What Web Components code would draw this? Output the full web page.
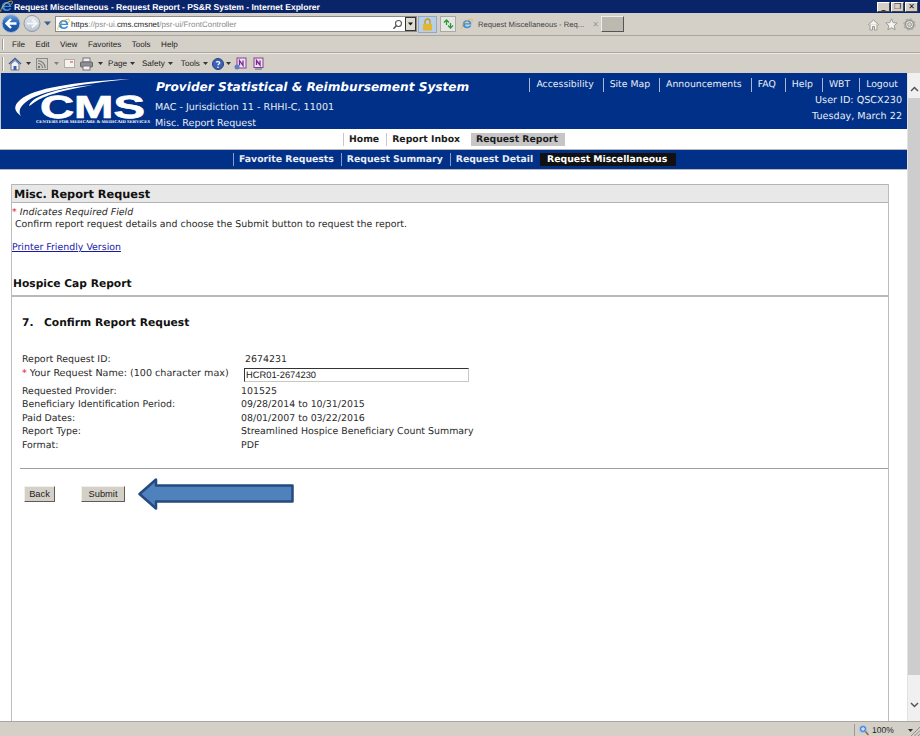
<!DOCTYPE html>
<html>
<head>
<meta charset="utf-8">
<title>Request Miscellaneous - Request Report - PS&amp;R System - Internet Explorer</title>
<style>
  html, body { margin: 0; height: 100%; overflow: hidden; background: #d4d0c8; text-rendering: geometricPrecision; }
  body { font-family: "DejaVu Sans", Verdana, sans-serif; font-size: 9.4px; color: #222; }
</style>
</head>
<body>
<ie-window>
  <ie-titlebar slot="chrome">Request Miscellaneous - Request Report - PS&amp;R System - Internet Explorer</ie-titlebar>
  <ie-addressbar slot="chrome"></ie-addressbar>
  <ie-menubar slot="chrome"></ie-menubar>
  <ie-commandbar slot="chrome"></ie-commandbar>

  <cms-header></cms-header>
  <cms-nav></cms-nav>
  <cms-subnav></cms-subnav>
  <report-page></report-page>

  <ie-statusbar slot="status"></ie-statusbar>
</ie-window>

<script>
const ieLogo = size => `
  <svg width="${size}" height="${size}" viewBox="0 0 16 16">
    <path d="M2.2 8.6C2.2 5 5 2.6 8.4 2.6c3.2 0 5.5 2.4 5.5 6H5.4c.1 2 1.400 3 3.100 3 1.300 0 2.300-.5 3.100-1.500h2.200c-1 2.300-3 3.500-5.400 3.500-3.500 0-6.200-2-6.200-5zM5.500 7h5.800c-.2-1.500-1.300-2.500-2.900-2.500S5.800 5.500 5.500 7z" fill="#3b8fd8"/>
    <path d="M1 14.500C.2 12 3.500 6 9 3c2.500-1.400 5.200-2.200 6-1.300.6.700.1 2.300-.8 3.800" fill="none" stroke="#f0b52c" stroke-width="1.100"/>
  </svg>`;

class IeWindow extends HTMLElement {
  constructor() {
    super();
    this.root = this.attachShadow({ mode: 'open' });
    this.root.innerHTML = `
      <style>
        :host { display: flex; flex-direction: column; width: 920px; height: 736px; overflow: hidden; }
        .viewport { flex: 1; min-height: 0; display: flex; background: #fff; }
        .page { flex: 1; min-width: 0; display: flex; flex-direction: column; }
        .scroll { width: 13px; background: #f0f0f0; border-left: 1px solid #e2e2e2; display: flex; flex-direction: column; box-sizing: border-box; }
        .scroll .up { height: 25px; display: flex; align-items: center; justify-content: center; padding-top: 6px; box-sizing: border-box; }
        .scroll .down { height: 46px; display: flex; align-items: flex-end; justify-content: center; padding-bottom: 13px; box-sizing: border-box; }
        .scroll .thumb { flex: 1; background: #cdcdcd; }
      </style>
      <slot name="chrome"></slot>
      <div class="viewport">
        <div class="page"><slot></slot></div>
        <div class="scroll">
          <div class="up"><svg width="9" height="6" viewBox="0 0 9 6"><path d="M1 5l3.500-3.500L8 5" fill="none" stroke="#555" stroke-width="1.500"/></svg></div>
          <div class="thumb"></div>
          <div class="down"><svg width="9" height="6" viewBox="0 0 9 6"><path d="M1 1l3.500 3.500L8 1" fill="none" stroke="#555" stroke-width="1.500"/></svg></div>
        </div>
      </div>
      <slot name="status"></slot>`;
  }
}

class IeTitlebar extends HTMLElement {
  constructor() {
    super();
    this.root = this.attachShadow({ mode: 'open' });
    this.root.innerHTML = `
      <style>
        :host { display: flex; align-items: center; height: 13px; background: #0a246a; color: #fff; font: bold 8.560px "Liberation Sans", sans-serif; white-space: nowrap; }
        .logo { width: 14px; height: 13px; display: flex; }
        .text { flex: 1; }
        .ctl { display: flex; gap: 1px; padding: 1px 2px 0 0; }
        .ctl span { background: #d4d0c8; border: 1px solid; border-color: #fff #444 #444 #fff; height: 8px; width: 11px; color: #111; font: bold 8px/8px "DejaVu Sans", sans-serif; text-align: center; overflow: hidden; }
      </style>
      <span class="logo">${ieLogo(13)}</span>
      <span class="text"><slot></slot></span>
      <span class="ctl"><span>_</span><span>&#10064;</span><span>&#10005;</span></span>`;
  }
}

class IeAddressbar extends HTMLElement {
  constructor() {
    super();
    this.root = this.attachShadow({ mode: 'open' });
    this.root.innerHTML = `
      <style>
        :host { display: flex; align-items: center; height: 22px; background: #d4d0c8; border-bottom: 1px solid #a8a6a0; font: 7.950px "Liberation Sans", Arial, sans-serif; color: #333; }
        .nav { display: flex; align-items: center; width: 55px; padding-left: 1px; box-sizing: border-box; }
        .addr { width: 362px; height: 16px; box-sizing: border-box; background: #fff; border: 1px solid #8a8a8a; display: flex; align-items: center; padding-left: 1px; gap: 1px; color: #8b8b8b; }
        .addr b { font-weight: normal; color: #222; }
        .url { flex: 1; white-space: nowrap; }
        .addr .s { margin-right: 1px; }
        .lock { width: 19px; height: 17px; margin-left: 1px; background: #b9cfe6; border: 1px solid #93a8c4; box-sizing: border-box; display: flex; align-items: center; justify-content: center; }
        .go { width: 16px; height: 16px; margin-left: 3px; border: 1px solid #a9a9a9; background: #e6e6e2; box-sizing: border-box; display: flex; align-items: center; justify-content: center; }
        .tab { display: flex; align-items: center; gap: 5px; width: 142px; height: 21px; margin-left: 3px; padding-left: 2px; box-sizing: border-box; white-space: nowrap; color: #444; font-size: 7.650px; }
        .tab .x { margin-left: 3px; color: #999; font-size: 8px; }
        .new { width: 23px; height: 16px; background: #bdb9b0; border: 1px solid; border-color: #f0eee8 #555 #555 #f0eee8; box-sizing: border-box; }
        .tools { margin-left: auto; display: flex; gap: 5px; padding-right: 4px; align-items: center; }
      </style>
      <div class="nav">
        <svg width="54" height="20" viewBox="0 0 54 20">
          <defs>
            <linearGradient id="bk" x1="0" y1="0" x2="0" y2="1"><stop offset="0" stop-color="#7aa8dc"/><stop offset=".5" stop-color="#1e5fb4"/><stop offset="1" stop-color="#1a4f9c"/></linearGradient>
            <linearGradient id="fw" x1="0" y1="0" x2="0" y2="1"><stop offset="0" stop-color="#e4e8ed"/><stop offset="1" stop-color="#b9c3cf"/></linearGradient>
          </defs>
          <circle cx="31" cy="9.500" r="8" fill="url(#fw)" stroke="#8e98a6"/>
          <path d="M26 9.500h9.500M31 5.500l4.500 4-4.500 4" fill="none" stroke="#f4f6f8" stroke-width="2"/>
          <circle cx="10" cy="9.500" r="9" fill="url(#bk)" stroke="#a8bdd8"/>
          <path d="M15.500 9.500H6M10 5L5.500 9.500 10 14" fill="none" stroke="#fff" stroke-width="2.400"/>
          <path d="M43 7.500h7l-3.500 4z" fill="#33608f"/>
        </svg>
      </div>
      <div class="addr">
        ${ieLogo(13)}
        <span class="url"><b>https</b>://psr-ui.<b>cms.cmsnet</b>/psr-ui/FrontController</span>
        <svg class="s" width="11" height="11" viewBox="0 0 11 11"><circle cx="6.500" cy="4.500" r="3" fill="none" stroke="#555" stroke-width="1.100"/><path d="M4.300 6.800L1.500 9.800" stroke="#555" stroke-width="1.500"/></svg>
        <svg width="11" height="14" viewBox="0 0 11 14"><rect x=".5" y=".5" width="10" height="13" fill="#dedbd3" stroke="#333"/><path d="M3 5.500h5L5.500 8.500z" fill="#111"/></svg>
      </div>
      <div class="lock"><svg width="11" height="13" viewBox="0 0 11 13"><path d="M3 6V3.500a2.500 2.500 0 015 0V6" fill="none" stroke="#c59a1c" stroke-width="1.400"/><rect x="1" y="6" width="9" height="6.500" fill="#e4b62e"/></svg></div>
      <div class="go"><svg width="11" height="10" viewBox="0 0 11 10"><path d="M1 3.500l2.500-2.500L6 3.500M3.500 1.500V6" fill="none" stroke="#2d9b3a" stroke-width="1.300"/><path d="M5 6.500l2.500 2.500L10 6.500M7.500 8.500V4" fill="none" stroke="#2d9b3a" stroke-width="1.300"/></svg></div>
      <div class="tab">${ieLogo(12)}<span>Request Miscellaneous - Req...</span><span class="x">&#10005;</span></div>
      <div class="new"></div>
      <div class="tools">
        <svg width="13" height="13" viewBox="0 0 13 13"><path d="M1 7l5.500-5L12 7M3 6.500V12h2.500V8.500h2V12H10V6.500" fill="#f5f4f0" stroke="#9b9b96"/></svg>
        <svg width="13" height="13" viewBox="0 0 13 13"><path d="M6.500 .8l1.700 3.800 4 .4-3 2.700.9 4.100-3.600-2.100-3.600 2.100.9-4.100-3-2.700 4-.4z" fill="#f5f4f0" stroke="#9b9b96"/></svg>
        <svg width="13" height="13" viewBox="0 0 13 13"><circle cx="6.500" cy="6.500" r="4.200" fill="#f5f4f0" stroke="#9b9b96" stroke-width="2"/><circle cx="6.500" cy="6.500" r="5.500" fill="none" stroke="#b0b0aa" stroke-width="1.600" stroke-dasharray="2 2.300"/><circle cx="6.500" cy="6.500" r="2" fill="#d4d0c8" stroke="#9b9b96"/></svg>
      </div>`;
  }
}

class IeMenubar extends HTMLElement {
  constructor() {
    super();
    this.root = this.attachShadow({ mode: 'open' });
    const items = ['File', 'Edit', 'View', 'Favorites', 'Tools', 'Help'];
    this.root.innerHTML = `
      <style>
        :host { display: flex; align-items: center; height: 17px; box-sizing: border-box; background: #d4d0c8; border-top: 1px solid #d4d0c8; border-bottom: 1px solid #a8a6a0; font: 8.100px "Liberation Sans", Arial, sans-serif; color: #222; padding-left: 2px; }
        .grip { width: 1px; height: 11px; background: #9e9c96; border-right: 1px solid #fff; margin-right: 8px; }
        span { margin-right: 10.500px; }
      </style>
      <div class="grip"></div>
      ${items.map(i => `<span>${i}</span>`).join('')}`;
  }
}

class IeCommandbar extends HTMLElement {
  constructor() {
    super();
    this.root = this.attachShadow({ mode: 'open' });
    const caret = '<svg class="caret" width="5" height="3" viewBox="0 0 5 3"><path d="M0 0h5L2.500 3z" fill="#333"/></svg>';
    this.root.innerHTML = `
      <style>
        :host { display: flex; align-items: center; height: 20px; box-sizing: border-box; background: #d4d0c8; border-top: 1px solid #eceae4; font: 8.100px "Liberation Sans", Arial, sans-serif; color: #222; padding-left: 2px; }
        .grip { width: 1px; height: 14px; background: #9e9c96; border-right: 1px solid #fff; margin-right: 4px; }
        .i { display: flex; align-items: center; gap: 3px; margin-right: 8px; }
        .caret { flex: none; }
      </style>
      <div class="grip"></div>
      <div class="i" style="gap:4px;margin-right:5px"><svg width="14" height="14" viewBox="0 0 14 14"><path d="M1 7l6-5.500L13 7" fill="none" stroke="#3a5fa8" stroke-width="1.500"/><path d="M3 7v6h8V7L7 3.500z" fill="#f2f2f2" stroke="#6b7894"/><rect x="5.500" y="9" width="3" height="4" fill="#3a5fa8"/></svg>${caret}</div>
      <div class="i" style="gap:6px;margin-right:5px"><svg width="12" height="12" viewBox="0 0 12 12"><rect x=".5" y=".5" width="11" height="11" fill="#cfcdc7" stroke="#8a8a86"/><circle cx="3" cy="9" r="1.200" fill="#777"/><path d="M2 5.500a4.500 4.500 0 014.500 4.500M2 2.800A7.200 7.200 0 019.200 10" fill="none" stroke="#777" stroke-width="1.100"/></svg><svg class="caret" width="5" height="3" viewBox="0 0 5 3" opacity=".5"><path d="M0 0h5L2.500 3z" fill="#333"/></svg></div>
      <div class="i" style="margin-right:5px"><svg width="11" height="9" viewBox="0 0 11 9"><rect x=".5" y=".5" width="10" height="8" fill="#f4f3f0" stroke="#b0aea8"/><path d="M6 3h3" stroke="#c43"/></svg></div>
      <div class="i" style="gap:5px;margin-right:5px"><svg width="13" height="14" viewBox="0 0 13 14"><rect x="3" y="1" width="7" height="4" fill="#eee" stroke="#777"/><rect x=".5" y="5" width="12" height="5" rx="1" fill="#8d8f94" stroke="#666"/><rect x="3" y="9" width="7" height="4" fill="#f2f2f2" stroke="#777"/></svg>${caret}</div>
      <div class="i" style="margin-right:7px">Page ${caret}</div>
      <div class="i">Safety ${caret}</div>
      <div class="i" style="margin-right:4px">Tools ${caret}</div>
      <div class="i" style="gap:2px;margin-right:3px"><svg width="12" height="12" viewBox="0 0 12 12"><circle cx="6" cy="6" r="5.500" fill="#3c62b5" stroke="#26408a"/><path d="M4.300 4.500C4.500 3.300 7.700 3.200 7.700 4.800 7.700 6 6 6 6 7.300" fill="none" stroke="#fff" stroke-width="1.300"/><circle cx="6" cy="9.200" r=".8" fill="#fff"/></svg>${caret}</div>
      <div class="i" style="gap:5px">
        <svg width="13" height="13" viewBox="0 0 13 13"><rect x="3" y="1" width="9" height="10" fill="#ece3f0" stroke="#8a3f96"/><path d="M5.500 8.500V3.500l3.500 5v-5" fill="none" stroke="#7b2a8c" stroke-width="1.300"/><circle cx="3" cy="10" r="2.500" fill="#5a7fc8"/></svg>
        <svg width="13" height="13" viewBox="0 0 13 13"><rect x="2" y="1" width="9" height="9.500" fill="#ece3f0" stroke="#8a3f96"/><path d="M4.500 8V3.500L8 8V3.500" fill="none" stroke="#7b2a8c" stroke-width="1.300"/><path d="M3 12h7" stroke="#7d8ba0" stroke-width="1.500"/></svg>
      </div>`;
  }
}

class CmsLogo extends HTMLElement {
  constructor() {
    super();
    this.root = this.attachShadow({ mode: 'open' });
    this.root.innerHTML = `
      <style>
        :host { display: block; width: 152px; height: 56px; flex: none; }
        svg { display: block; }
      </style>
      <svg width="152" height="56" viewBox="0 0 152 56">
        <path d="M20 43C13 38 12 33 19 27 33 15 72 9 129 6 78 11 38 18 25 29 19 34 17 38 20 43z" fill="#fff"/>
        <path d="M28 33C30 24 54 15 92 12 62 17 42 23 34 29 31 31 30 32 28 33z" fill="#fff"/>
        <text x="39" y="45" font-family="'Liberation Sans', sans-serif" font-weight="bold" font-size="32" fill="#fff" stroke="#fff" stroke-width=".7" textLength="105" lengthAdjust="spacingAndGlyphs">CMS</text>
        <text x="35" y="50" font-family="'Liberation Serif', serif" font-weight="bold" font-size="4.400" fill="#fff" textLength="114" lengthAdjust="spacingAndGlyphs">CENTERS FOR MEDICARE &amp; MEDICAID SERVICES</text>
      </svg>`;
  }
}

class CmsHeader extends HTMLElement {
  constructor() {
    super();
    this.root = this.attachShadow({ mode: 'open' });
    const links = ['Accessibility', 'Site Map', 'Announcements', 'FAQ', 'Help', 'WBT', 'Logout'];
    this.root.innerHTML = `
      <style>
        :host { display: flex; height: 56px; background: #003087; color: #e8edf6; font: 9.580px "DejaVu Sans", sans-serif; border-left: 1px solid #c8c8c8; box-sizing: border-box; white-space: nowrap; }
        .logo { width: 153px; flex: none; }
        .main { display: flex; flex-direction: column; padding-left: 1px; }
        .title { font: italic bold 12.150px/15px "DejaVu Sans", sans-serif; color: #fff; margin: 7px 0 4.500px 1px; }
        .sub { height: 16.500px; line-height: 16.500px; }
        .right { margin-left: auto; display: flex; flex-direction: column; align-items: flex-end; padding: 5px 5px 0 0; }
        .links { display: flex; height: 14px; margin-bottom: 1px; font-size: 9.300px; padding-right: 4px; }
        .links span { border-left: 1px solid #a9b7d4; padding: 0 9px 0 6px; line-height: 14px; }
        .links span:last-child { padding-right: 0; }
        .info { line-height: 16px; height: 16px; font-size: 9.650px; }
      </style>
      <div class="logo"><cms-logo></cms-logo></div>
      <div class="main">
        <div class="title">Provider Statistical &amp; Reimbursement System</div>
        <div class="sub">MAC - Jurisdiction 11 - RHHI-C, 11001</div>
        <div class="sub">Misc. Report Request</div>
      </div>
      <div class="right">
        <div class="links">${links.map(l => `<span>${l}</span>`).join('')}</div>
        <div class="info">User ID: QSCX230</div>
        <div class="info">Tuesday, March 22</div>
      </div>`;
  }
}

class CmsNav extends HTMLElement {
  constructor() {
    super();
    this.root = this.attachShadow({ mode: 'open' });
    this.root.innerHTML = `
      <style>
        :host { display: flex; align-items: center; height: 21px; padding-left: 343px; background: #fff; border-bottom: 1px solid #b8b8b8; box-sizing: border-box; font: bold 9.300px "DejaVu Sans", sans-serif; color: #1d1d1d; white-space: nowrap; }
        span { height: 13px; line-height: 14px; padding: 0 7px 0 5px; border-left: 1px solid #c8c8c8; }
        .inbox { padding-right: 11px; }
        .active { background: #c6c6c6; border-left: 0; padding: 0 7px 0 5px; }
      </style>
      <span>Home</span><span class="inbox">Report Inbox</span><span class="active">Request Report</span>`;
  }
}

class CmsSubnav extends HTMLElement {
  constructor() {
    super();
    this.root = this.attachShadow({ mode: 'open' });
    this.root.innerHTML = `
      <style>
        :host { display: flex; align-items: center; height: 20px; padding-left: 233px; background: #003087; border-bottom: 1px solid #b8b8b8; box-sizing: border-box; font: bold 9.300px "DejaVu Sans", sans-serif; color: #e9edf5; white-space: nowrap; }
        span { height: 13px; line-height: 14px; padding: 0 7px 0 5px; border-left: 1px solid #8b9cc2; }
        .active { background: #111; color: #fff; border-left: 0; padding: 0 9px 0 7px; }
      </style>
      <span>Favorite Requests</span><span>Request Summary</span><span>Request Detail</span><span class="active">Request Miscellaneous</span>`;
  }
}

class ReportRow extends HTMLElement {
  constructor() {
    super();
    this.root = this.attachShadow({ mode: 'open' });
    this.root.innerHTML = `
      <style>
        :host { display: grid; grid-template-columns: 219px 1fr; height: 13.600px; line-height: 13.600px; white-space: nowrap; }
      </style>
      <div><slot name="label"></slot></div>
      <div><slot></slot></div>`;
  }
}

class ReportButton extends HTMLElement {
  constructor() {
    super();
    this.root = this.attachShadow({ mode: 'open' });
    this.root.innerHTML = `
      <style>
        :host { display: block; }
        button { display: block; width: 100%; height: 16px; padding: 0; background: #d4d0c8; border: 1px solid; border-color: #f2f0ea #5d5c58 #5d5c58 #f2f0ea; font: 9.300px "Liberation Sans", Arial, sans-serif; color: #222; }
      </style>
      <button type="button"><slot></slot></button>`;
  }
}

class ReportPage extends HTMLElement {
  constructor() {
    super();
    this.root = this.attachShadow({ mode: 'open' });
    this.root.innerHTML = `
      <style>
        :host { display: block; flex: 1; min-height: 0; background: #fff; padding: 14px 18px 0 11px; box-sizing: border-box; font: 9.420px "DejaVu Sans", sans-serif; color: #2a2a2a; }
        .box { height: 100%; border-left: 1px solid #bdbdbd; border-right: 1px solid #bdbdbd; box-sizing: border-box; }
        h1 { margin: 0; height: 19px; line-height: 19px; background: #e8e8e8; border-top: 1px solid #b4b4b4; border-bottom: 1px solid #b4b4b4; font-size: 11.300px; font-weight: bold; color: #111; padding-left: 2px; box-sizing: border-box; }
        .req { height: 12px; line-height: 12px; margin-top: 4px; font-style: italic; }
        .star { color: #e0143c; font-style: normal; }
        .intro { height: 12px; line-height: 12px; padding-left: 3px; }
        a { display: block; margin-top: 11px; color: #1a1aa6; text-decoration: underline; height: 12px; line-height: 12px; }
        h2 { margin: 22px 0 0; height: 15px; line-height: 15px; font-size: 10.700px; font-weight: bold; color: #111; padding-left: 1px; }
        .rule { height: 2px; background: #b9b9b6; margin-top: 4px; }
        h3 { margin: 18px 0 0 10px; height: 15px; line-height: 15px; font-size: 10.730px; font-weight: bold; color: #111; display: flex; }
        h3 b { width: 22px; }
        .rows { margin: 23px 0 0 10px; }
        .wide { font-size: 9.600px; }
        .input { display: block; margin: 1px 0 0 3px; width: 225px; height: 14px; box-sizing: border-box; border: 1px solid; border-color: #333 #c8c8c0 #c8c8c0 #333; background: #fff; font: 9.330px/12px "Liberation Sans", Arial, sans-serif; padding-left: 1px; color: #222; }
        .rule2 { height: 1px; background: #a0a09c; margin: 15px 0 0 8px; }
        .actions { display: flex; align-items: center; margin: 9px 0 0 12px; }
        .back { width: 31px; }
        .submit { width: 44px; margin-left: 26px; }
        .arrow { margin-left: 13px; display: block; }
      </style>
      <div class="box">
        <h1>Misc. Report Request</h1>
        <div class="req"><span class="star">*</span> Indicates Required Field</div>
        <div class="intro">Confirm report request details and choose the Submit button to request the report.</div>
        <a href="#">Printer Friendly Version</a>
        <h2>Hospice Cap Report</h2>
        <div class="rule"></div>
        <h3><b>7.</b> Confirm Report Request</h3>
        <div class="rows">
          <report-row><span slot="label">Report Request ID:</span><span style="padding-left:4px">2674231</span></report-row>
          <report-row style="height:18px"><span slot="label" class="wide"><span class="star">*</span> Your Request Name: (100 character max)</span><span class="input">HCR01-2674230</span></report-row>
          <report-row><span slot="label">Requested Provider:</span>101525</report-row>
          <report-row><span slot="label">Beneficiary Identification Period:</span>09/28/2014 to 10/31/2015</report-row>
          <report-row><span slot="label">Paid Dates:</span>08/01/2007 to 03/22/2016</report-row>
          <report-row><span slot="label">Report Type:</span>Streamlined Hospice Beneficiary Count Summary</report-row>
          <report-row><span slot="label">Format:</span>PDF</report-row>
        </div>
        <div class="rule2"></div>
        <div class="actions">
          <report-button class="back">Back</report-button>
          <report-button class="submit">Submit</report-button>
          <svg class="arrow" width="156" height="32" viewBox="0 0 156 32">
            <path d="M1.500 16L18 1.500V7.500H154.500V23.500H18V30.500z" fill="#4f81bd" stroke="#244a80" stroke-width="2.500" stroke-linejoin="round"/>
          </svg>
        </div>
      </div>`;
  }
}

class IeStatusbar extends HTMLElement {
  constructor() {
    super();
    this.root = this.attachShadow({ mode: 'open' });
    this.root.innerHTML = `
      <style>
        :host { display: flex; justify-content: flex-end; align-items: stretch; height: 15px; background: #d4d0c8; border-top: 1px solid #a8a6a0; box-sizing: border-box; font: 8.500px "Liberation Sans", Arial, sans-serif; color: #222; }
        .zoom { width: 66px; margin-top: 2px; border-left: 1px solid #9d9b95; display: flex; align-items: center; gap: 3px; padding-left: 4px; box-sizing: border-box; position: relative; }
        .zoom .c { margin-left: 11px; }
        .grip { position: absolute; right: 0; bottom: 0; }
      </style>
      <div class="zoom">
        <svg width="10" height="11" viewBox="0 0 10 11"><circle cx="4" cy="4" r="3.500" fill="#3f7fe0" stroke="#a9c3ea"/><path d="M2 4h4M4 2v4" stroke="#fff"/><path d="M6.500 6.500l3 3.500" stroke="#a0622a" stroke-width="1.500"/></svg>
        <span>100%</span>
        <svg class="c" width="5" height="3" viewBox="0 0 5 3"><path d="M0 0h5L2.500 3z" fill="#333"/></svg>
        <svg class="grip" width="10" height="10" viewBox="0 0 10 10"><path d="M10 1L1 10M10 4.500L4.500 10M10 8L8 10" stroke="#8f8d87"/></svg>
      </div>`;
  }
}

customElements.define('ie-window', IeWindow);
customElements.define('ie-titlebar', IeTitlebar);
customElements.define('ie-addressbar', IeAddressbar);
customElements.define('ie-menubar', IeMenubar);
customElements.define('ie-commandbar', IeCommandbar);
customElements.define('cms-logo', CmsLogo);
customElements.define('cms-header', CmsHeader);
customElements.define('cms-nav', CmsNav);
customElements.define('cms-subnav', CmsSubnav);
customElements.define('report-row', ReportRow);
customElements.define('report-button', ReportButton);
customElements.define('report-page', ReportPage);
customElements.define('ie-statusbar', IeStatusbar);
</script>
</body>
</html>
